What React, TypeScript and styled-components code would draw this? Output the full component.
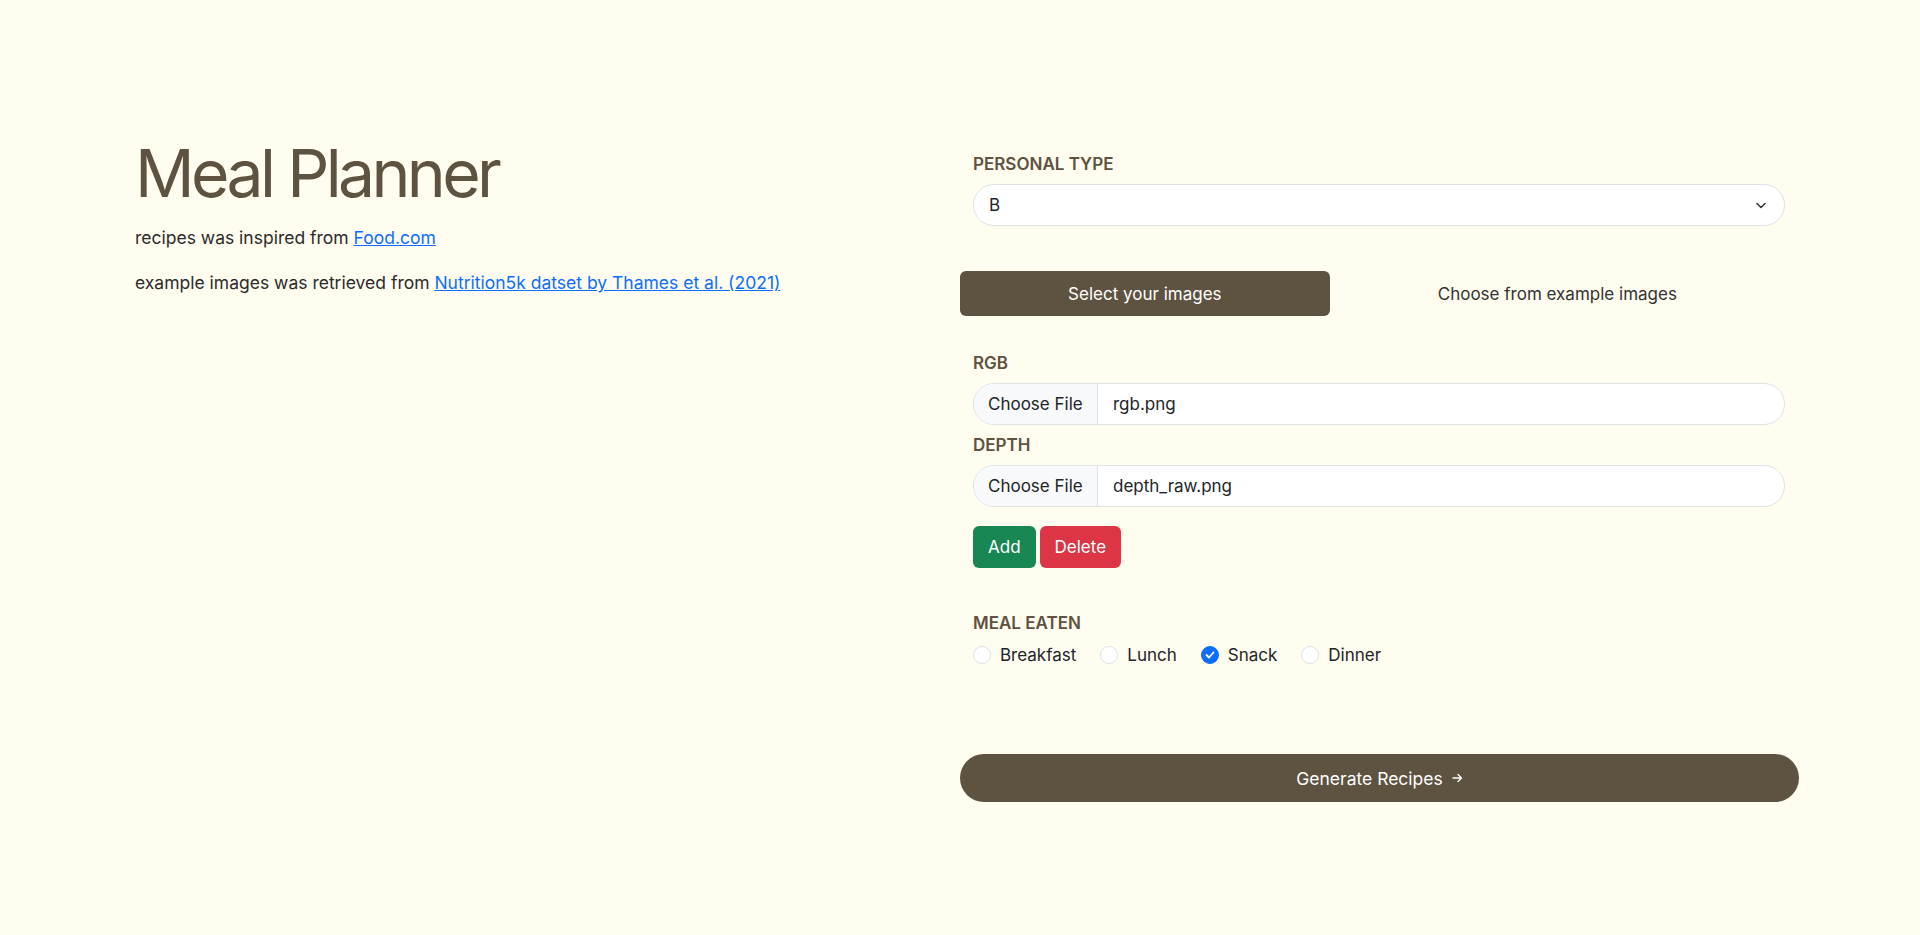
import React from "react";
import styled, { createGlobalStyle } from "styled-components";

const Global = createGlobalStyle`
  html, body { margin: 0; padding: 0; background: #fffcf0; }
  body { font-family: Inter, "Open Sans", sans-serif; color: #2b2b2b; }
  * { box-sizing: border-box; }
`;

const Page = styled.main`
  display: grid;
  grid-template-columns: 960px 839px;
  min-height: 935px;
`;

const Intro = styled.section`
  padding: 134px 0 0 135px;
`;

const Title = styled.h1`
  margin: 0 0 12px;
  font-size: 66px;
  line-height: 79px;
  font-weight: 400;
  letter-spacing: -0.055em;
  color: #5e5240;
`;

const Note = styled.p`
  margin: 0 0 19px;
  font-size: 17.5px;
  line-height: 26px;
  color: #2b2b2b;
`;

const Link = styled.a`
  color: #0d6efd;
  text-decoration: underline;
`;

const Form = styled.section`
  padding-top: 152px;
  display: flex;
  flex-direction: column;
`;

const Field = styled.div<{ $mt?: number }>`
  padding: 0 14px 0 13px;
  margin-top: ${(p) => p.$mt ?? 0}px;
`;

const Label = styled.div`
  font-size: 17px;
  line-height: 24px;
  font-weight: 600;
  text-transform: uppercase;
  color: #5e5240;
  margin-bottom: 8px;
`;

const Select = styled.div`
  height: 42px;
  border: 1px solid #dee2e6;
  border-radius: 21px;
  background: #fff;
  display: flex;
  align-items: center;
  justify-content: space-between;
  padding: 0 18px 0 15px;
  font-size: 17px;
  color: #212529;
`;

const Tabs = styled.div`
  display: flex;
  margin-top: 45px;
  width: 825px;
`;

const Tab = styled.button<{ $active?: boolean }>`
  flex: 1 1 auto;
  height: 45px;
  border: 0;
  border-radius: 6px;
  font-family: inherit;
  font-size: 17px;
  background: ${(p) => (p.$active ? "#5e5240" : "transparent")};
  color: ${(p) => (p.$active ? "#fff" : "#333")};
  padding: 0 16px;
`;

const FileBox = styled.div`
  height: 42px;
  border: 1px solid #dee2e6;
  border-radius: 21px;
  background: #fff;
  display: flex;
  align-items: stretch;
  overflow: hidden;
  font-size: 17px;
  color: #212529;
`;

const FileButton = styled.span`
  display: flex;
  align-items: center;
  padding-left: 14px;
  width: 124px;
  background: #f8f9fa;
  border-right: 1px solid #dee2e6;
`;

const FileName = styled.span`
  display: flex;
  align-items: center;
  padding-left: 15px;
`;

const Actions = styled.div`
  display: flex;
  gap: 4px;
  margin-top: 19px;
`;

const ActionButton = styled.button<{ $tone: "add" | "delete" }>`
  height: 42px;
  border: 0;
  border-radius: 6px;
  padding: 0 15px;
  font-family: inherit;
  font-size: 17px;
  color: #fff;
  background: ${(p) => (p.$tone === "add" ? "#198754" : "#dc3545")};
`;

const Radios = styled.div`
  display: flex;
  align-items: center;
  gap: 24px;
  margin-top: 4px;
`;

const RadioItem = styled.label`
  display: flex;
  align-items: center;
  gap: 9px;
  font-size: 17px;
  line-height: 24px;
  color: #212529;
`;

const RadioDot = styled.span<{ $checked?: boolean }>`
  width: 18px;
  height: 18px;
  border-radius: 50%;
  border: 1px solid ${(p) => (p.$checked ? "#0d6efd" : "#dee2e6")};
  background: ${(p) => (p.$checked ? "#0d6efd" : "#fff")};
  display: flex;
  align-items: center;
  justify-content: center;
`;

const Generate = styled.button`
  margin-top: 87px;
  width: 839px;
  height: 48px;
  border: 0;
  border-radius: 24px;
  background: #5e5240;
  color: #fff;
  font-family: inherit;
  font-size: 17.5px;
  display: flex;
  align-items: center;
  justify-content: center;
  gap: 9px;
`;

const meals = ["Breakfast", "Lunch", "Snack", "Dinner"];

export default function App() {
  return (
    <>
      <Global />
      <Page>
        <Intro>
          <Title>Meal Planner</Title>
          <Note>
            recipes was inspired from <Link href="#">Food.com</Link>
          </Note>
          <Note>
            example images was retrieved from{" "}
            <Link href="#">Nutrition5k datset by Thames et al. (2021)</Link>
          </Note>
        </Intro>
        <Form>
          <Field>
            <Label>Personal Type</Label>
            <Select>
              <span>B</span>
              <svg width="10" height="7" viewBox="0 0 10 7" fill="none">
                <path d="M1 1.5 5 5.5 9 1.5" stroke="#343a40" strokeWidth="1.6" strokeLinecap="round" strokeLinejoin="round" />
              </svg>
            </Select>
          </Field>
          <Tabs>
            <Tab $active>Select your images</Tab>
            <Tab>Choose from example images</Tab>
          </Tabs>
          <Field $mt={35}>
            <Label>RGB</Label>
            <FileBox>
              <FileButton>Choose File</FileButton>
              <FileName>rgb.png</FileName>
            </FileBox>
          </Field>
          <Field $mt={8}>
            <Label>Depth</Label>
            <FileBox>
              <FileButton>Choose File</FileButton>
              <FileName>depth_raw.png</FileName>
            </FileBox>
            <Actions>
              <ActionButton $tone="add">Add</ActionButton>
              <ActionButton $tone="delete">Delete</ActionButton>
            </Actions>
          </Field>
          <Field $mt={43}>
            <Label>Meal Eaten</Label>
            <Radios>
              {meals.map((m) => (
                <RadioItem key={m}>
                  <RadioDot $checked={m === "Snack"}>
                    {m === "Snack" && (
                      <svg width="10" height="8" viewBox="0 0 10 8" fill="none">
                        <path d="M1.5 4 4 6.5 8.5 1.5" stroke="#fff" strokeWidth="1.8" strokeLinecap="round" strokeLinejoin="round" />
                      </svg>
                    )}
                  </RadioDot>
                  {m}
                </RadioItem>
              ))}
            </Radios>
          </Field>
          <Generate>
            Generate Recipes
            <svg width="11" height="10" viewBox="0 0 11 10" fill="none">
              <path d="M1 5h8.5M6 1.5 9.5 5 6 8.5" stroke="#fff" strokeWidth="1.3" strokeLinecap="round" strokeLinejoin="round" />
            </svg>
          </Generate>
        </Form>
      </Page>
    </>
  );
}
